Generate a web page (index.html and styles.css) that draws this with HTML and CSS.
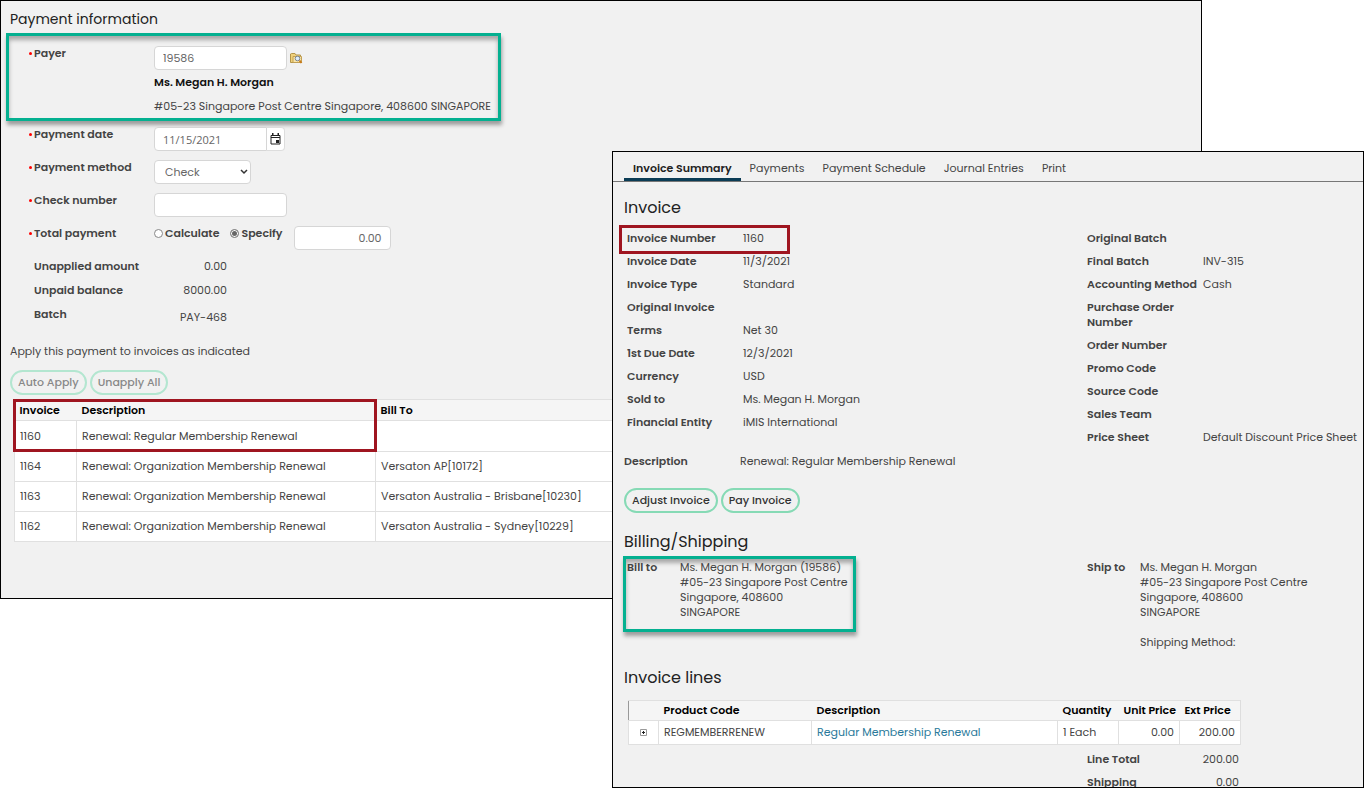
FILE: index.html
```html
<!DOCTYPE html>
<html lang="en">
<head>
    <meta charset="UTF-8">
    <meta name="viewport" content="width=device-width, initial-scale=1.0">
    <title>Payment and invoice</title>
    <link rel="stylesheet" href="styles.css">
</head>
<body>

<main class="screens">
    <section class="panel payment">
        <h2>Payment information</h2>
        <form class="payment-form" onsubmit="return false">
            <div class="row payer">
                <label class="required" for="payer">Payer</label>
                <div>
                    <div class="field">
                        <input type="text" id="payer" value="19586">
                        <button type="button" class="find" aria-label="Find payer">
                            <svg width="13" height="12" viewBox="0 0 13 12">
                                <path d="M.5 2v8.500h10V3H6L5 1.500H1.500z" fill="#efd17c" stroke="#b5954a"/>
                                <path d="M3 4.500h8.500v6H3z" fill="#fbe6a6" stroke="#c2a055"/>
                                <circle cx="7.500" cy="6.500" r="2.300" fill="#dcebfa" stroke="#7d8794"/>
                                <path d="M9.500 8.500l2 2.500" stroke="#c77b1a" stroke-width="2"/>
                            </svg>
                        </button>
                    </div>
                    <p class="payer-name">Ms. Megan H. Morgan</p>
                    <p class="payer-address">#05-23 Singapore Post Centre Singapore, 408600 SINGAPORE</p>
                </div>
            </div>
            <div class="row">
                <label class="required" for="date">Payment date</label>
                <div class="date-field">
                    <input type="text" id="date" value="11/15/2021">
                    <button type="button" aria-label="Open calendar">
                        <svg width="11" height="12" viewBox="0 0 11 12">
                            <path d="M1 2.500h9v8.500H1zM1 4.500h9" fill="none" stroke="#222"/>
                            <path d="M2 0h1.500v2.500H2zM7.500 0H9v2.500H7.500zM6 7h3v3H6z" fill="#222"/>
                        </svg>
                    </button>
                </div>
            </div>
            <div class="row">
                <label class="required" for="method">Payment method</label>
                <div class="select">
                    <select id="method"><option>Check</option></select>
                    <svg width="8" height="6" viewBox="0 0 8 6"><path d="M1 1l3 3 3-3" fill="none" stroke="#333" stroke-width="1.500"/></svg>
                </div>
            </div>
            <div class="row">
                <label class="required" for="checkNumber">Check number</label>
                <input type="text" id="checkNumber">
            </div>
            <div class="row">
                <label class="required" for="total">Total payment</label>
                <div class="total">
                    <label><input type="radio" name="mode">Calculate</label>
                    <label><input type="radio" name="mode" checked>Specify</label>
                    <input type="text" id="total" class="amount" value="0.00">
                </div>
            </div>
            <dl class="balances">
                <dt>Unapplied amount</dt><dd>0.00</dd>
                <dt>Unpaid balance</dt><dd>8000.00</dd>
                <dt>Batch</dt><dd class="batch">PAY-468</dd>
            </dl>
        </form>
        <p class="apply-text">Apply this payment to invoices as indicated</p>
        <div class="buttons apply-buttons">
            <button type="button" disabled>Auto Apply</button>
            <button type="button" disabled>Unapply All</button>
        </div>
        <div class="invoice-list">
            <table>
                <thead>
                    <tr><th class="col-id">Invoice</th><th class="col-desc">Description</th><th>Bill To</th></tr>
                </thead>
                <tbody>
                    <tr><td>1160</td><td>Renewal: Regular Membership Renewal</td><td></td></tr>
                    <tr><td>1164</td><td>Renewal: Organization Membership Renewal</td><td>Versaton AP[10172]</td></tr>
                    <tr><td>1163</td><td>Renewal: Organization Membership Renewal</td><td>Versaton Australia - Brisbane[10230]</td></tr>
                    <tr><td>1162</td><td>Renewal: Organization Membership Renewal</td><td>Versaton Australia - Sydney[10229]</td></tr>
                </tbody>
            </table>
        </div>
    </section>

    <section class="panel invoice">
        <nav class="tabs">
            <a href="#" class="active">Invoice Summary</a>
            <a href="#">Payments</a>
            <a href="#">Payment Schedule</a>
            <a href="#">Journal Entries</a>
            <a href="#">Print</a>
        </nav>

        <h2>Invoice</h2>
        <div class="columns">
            <dl class="details">
                <div class="marked"><dt>Invoice Number</dt><dd>1160</dd></div>
                <div><dt>Invoice Date</dt><dd>11/3/2021</dd></div>
                <div><dt>Invoice Type</dt><dd>Standard</dd></div>
                <div><dt>Original Invoice</dt><dd></dd></div>
                <div><dt>Terms</dt><dd>Net 30</dd></div>
                <div><dt>1st Due Date</dt><dd>12/3/2021</dd></div>
                <div><dt>Currency</dt><dd>USD</dd></div>
                <div><dt>Sold to</dt><dd>Ms. Megan H. Morgan</dd></div>
                <div><dt>Financial Entity</dt><dd>iMIS International</dd></div>
            </dl>
            <dl class="details">
                <div><dt>Original Batch</dt><dd></dd></div>
                <div><dt>Final Batch</dt><dd>INV-315</dd></div>
                <div><dt>Accounting Method</dt><dd>Cash</dd></div>
                <div><dt>Purchase Order<br>Number</dt><dd></dd></div>
                <div><dt>Order Number</dt><dd></dd></div>
                <div><dt>Promo Code</dt><dd></dd></div>
                <div><dt>Source Code</dt><dd></dd></div>
                <div><dt>Sales Team</dt><dd></dd></div>
                <div><dt>Price Sheet</dt><dd>Default Discount Price Sheet</dd></div>
            </dl>
        </div>
        <dl class="details summary">
            <div><dt>Description</dt><dd>Renewal: Regular Membership Renewal</dd></div>
        </dl>
        <div class="buttons">
            <button type="button">Adjust Invoice</button>
            <button type="button">Pay Invoice</button>
        </div>

        <h2 class="billing-title">Billing/Shipping</h2>
        <div class="columns">
            <dl class="address bill-to">
                <dt>Bill to</dt>
                <dd>Ms. Megan H. Morgan (19586)<br>#05-23 Singapore Post Centre<br>Singapore, 408600<br>SINGAPORE</dd>
            </dl>
            <dl class="address">
                <dt>Ship to</dt>
                <dd>Ms. Megan H. Morgan<br>#05-23 Singapore Post Centre<br>Singapore, 408600<br>SINGAPORE<br><br>Shipping Method:</dd>
            </dl>
        </div>

        <h2 class="lines-title">Invoice lines</h2>
        <div class="lines">
            <table>
                <thead>
                    <tr>
                        <th class="col-expand"></th>
                        <th class="col-code">Product Code</th>
                        <th>Description</th>
                        <th class="col-num">Quantity</th>
                        <th class="col-num">Unit Price</th>
                        <th class="col-num">Ext Price</th>
                    </tr>
                </thead>
                <tbody>
                    <tr>
                        <td class="col-expand">
                            <button type="button" class="expand" aria-label="Expand line">
                                <svg width="7" height="7" viewBox="0 0 7 7"><path d="M.5.5h6v6h-6z" fill="#fff" stroke="#999"/><path d="M2 3.500h3M3.500 2v3" stroke="#222"/></svg>
                            </button>
                        </td>
                        <td>REGMEMBERRENEW</td>
                        <td><a href="#">Regular Membership Renewal</a></td>
                        <td>1 Each</td>
                        <td class="num">0.00</td>
                        <td class="num">200.00</td>
                    </tr>
                </tbody>
            </table>
            <dl class="totals">
                <dt>Line Total</dt><dd>200.00</dd>
                <dt>Shipping</dt><dd>0.00</dd>
            </dl>
        </div>
    </section>
</main>

</body>
</html>
```
FILE: styles.css
```css
*, *::before, *::after {
    box-sizing: border-box;
}
body {
    margin: 0;
    background: #fff;
    color: #444;
    font-family: Poppins, Inter, sans-serif;
    font-size: 11px;
    line-height: 15px;
}
h2, p, dl, dd {
    margin: 0;
}
h2 {
    color: #222;
    font-size: 16px;
    font-weight: 400;
    line-height: 24px;
}
dt, label {
    font-weight: 600;
}
input, select, button {
    font-family: inherit;
    font-size: 11px;
    color: #666;
}
input[type="text"], select {
    height: 24px;
    padding: 0 8px;
    background: #fff;
    border: 1px solid #d6d6d6;
    border-radius: 4px;
}
input[type="text"] {
    width: 133px;
}
a {
    color: #2b7a9b;
    text-decoration: none;
}

/* two overlapping screens */
.screens {
    display: grid;
    grid-template-columns: 612fr 590fr 162fr;
    grid-template-rows: 100vh;
    height: 100vh;
    overflow: hidden;
}
.panel {
    grid-row: 1;
    min-width: 0;
    background: #f1f1f1;
    border: 1px solid #000;
}
.payment {
    grid-column: 1 / 3;
    align-self: start;
    padding: 6px 0 56px 9px;
}
.payment h2 {
    font-size: 14px;
}
.invoice {
    z-index: 1;
    grid-column: 2 / 4;
    margin-top: 151px;
    padding-left: 11px;
    overflow: hidden;
}

/* payment form */
.payment-form {
    display: grid;
    gap: 9px;
}
.row {
    display: grid;
    grid-template-columns: 120px 1fr;
    min-height: 24px;
    padding-left: 24px;
}
.required {
    position: relative;
}
.required::before {
    content: "";
    position: absolute;
    left: -5px;
    top: 6px;
    width: 3px;
    height: 3px;
    border-radius: 50%;
    background: #f00;
}
.payer {
    width: 495px;
    margin: 2px 0 -3px -4px;
    padding: 10px 0 4px 25px;
    border: 3px solid #04b090;
    box-shadow: 1px 4px 4px rgba(0, 0, 0, 0.35), inset 0 4px 4px rgba(0, 0, 0, 0.3);
}
.field {
    display: flex;
    align-items: center;
    gap: 3px;
}
.find, .expand {
    display: flex;
    padding: 0;
    border: 0;
    background: none;
}
.payer-name {
    margin-top: 5px;
    color: #111;
    font-weight: 600;
}
.payer-address {
    margin-top: 9px;
}
.date-field {
    display: flex;
}
.date-field input {
    width: 113px;
    border-radius: 4px 0 0 4px;
    font-family: "Open Sans", sans-serif;
}
.date-field button {
    display: flex;
    align-items: center;
    padding: 0 3px;
    background: #fff;
    border: 1px solid #ddd;
    border-left: 0;
    border-radius: 0 4px 4px 0;
}
.select {
    position: relative;
    width: 97px;
}
.select select {
    width: 100%;
    padding-left: 10px;
    appearance: none;
}
.select svg {
    position: absolute;
    right: 3px;
    top: 9px;
}
.total {
    display: flex;
    gap: 11px;
}
.total label {
    display: flex;
    height: 15px;
    align-items: center;
    gap: 2px;
}
.total input[type="radio"] {
    width: 9px;
    height: 9px;
    margin: 0;
    appearance: none;
    background: #fff;
    border: 1px solid #888;
    border-radius: 50%;
}
.total input[type="radio"]:checked {
    background: #666;
    box-shadow: inset 0 0 0 1px #fff;
}
.total .amount {
    width: 97px;
    text-align: right;
}
.balances {
    display: grid;
    grid-template-columns: 120px 73px;
    row-gap: 9px;
    padding-left: 24px;
}
.balances dd {
    text-align: right;
}
.balances .batch {
    padding-top: 3px;
}
.apply-text {
    margin-top: 19px;
}
.buttons {
    display: flex;
    gap: 3px;
}
.buttons button {
    height: 25px;
    padding: 0 6px;
    background: transparent;
    border: 2px solid #86dab5;
    border-radius: 13px;
    color: #333;
    font-weight: 500;
}
.buttons button:disabled {
    border-color: #b3e6d0;
    color: #888;
}
.apply-buttons {
    margin: 11px 0 4px;
}

/* tables */
table {
    width: 100%;
    table-layout: fixed;
    border-collapse: collapse;
}
th, td {
    padding: 0 5px;
    border: 1px solid #e0e0e0;
    text-align: left;
}
th {
    height: 21px;
    background: #f5f5f5;
    border-left: 0;
    border-right: 0;
    color: #000;
    font-weight: 600;
}
td {
    background: #fff;
}
.invoice-list {
    position: relative;
    padding-left: 4px;
}
.invoice-list td {
    height: 30px;
}
.invoice-list tr:first-child td {
    height: 31px;
}
.invoice-list::after {
    content: "";
    position: absolute;
    left: 3px;
    top: 0;
    width: 364px;
    height: 53px;
    border: 3px solid #9f1520;
}
.col-id {
    width: 62px;
}
.col-desc {
    width: 299px;
}

/* invoice */
.tabs {
    display: flex;
    height: 30px;
    margin: 0 0 14px -11px;
    padding-left: 11px;
    border-bottom: 1px solid #777;
}
.tabs a {
    padding: 9px 9px 0;
    color: #444;
}
.tabs .active {
    border-bottom: 3px solid #0b3c55;
    color: #222;
    font-weight: 600;
}
.columns {
    display: grid;
    grid-template-columns: 5fr 3fr;
    padding-left: 3px;
}
.details {
    display: grid;
    align-content: start;
    gap: 8px;
    padding-top: 11px;
}
.details > div {
    display: grid;
    grid-template-columns: 116px 1fr;
    position: relative;
}
.marked::after {
    content: "";
    position: absolute;
    left: -8px;
    top: -6px;
    width: 171px;
    height: 29px;
    border: 3px solid #9f1520;
}
.summary {
    padding: 9px 0 19px;
}
.billing-title {
    margin: 17px 0 2px;
}
.address {
    display: grid;
    grid-template-columns: 53px 1fr;
    align-self: start;
    padding-top: 4px;
}
.bill-to {
    width: 233px;
    height: 76px;
    margin-left: -4px;
    padding: 1px;
    border: 3px solid #04b090;
    box-shadow: 1px 4px 4px rgba(0, 0, 0, 0.35), inset 0 4px 4px rgba(0, 0, 0, 0.3);
}
.lines-title {
    margin: 16px 0 10px;
}
.lines {
    width: 613px;
    margin-left: 4px;
}
.lines th {
    height: 20px;
}
.lines th:first-child {
    border-left: 1px solid #999;
}
.lines th:last-child {
    border-right: 1px solid #ddd;
}
.lines td {
    height: 24px;
}
.col-expand {
    width: 30px;
}
.expand {
    margin: 0 auto;
}
.col-code {
    width: 153px;
}
.col-num {
    width: 61px;
    white-space: nowrap;
}
.lines .num {
    text-align: right;
}
.totals {
    display: grid;
    grid-template-columns: 80px 72px;
    justify-content: end;
    row-gap: 8px;
    padding: 7px 2px 0 0;
}
.totals dd {
    text-align: right;
}
```
